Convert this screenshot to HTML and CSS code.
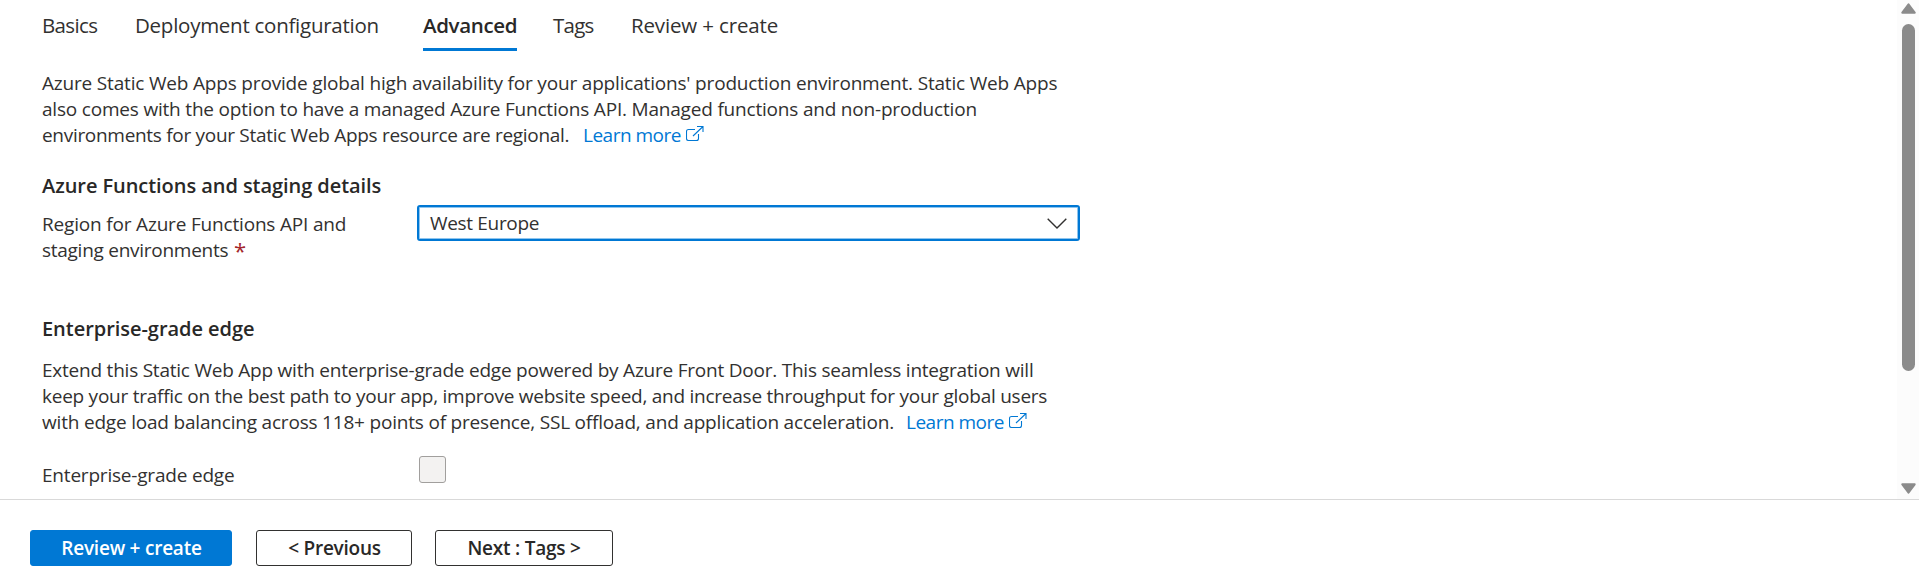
FILE: index.html
```html
<!DOCTYPE html>
<html lang="en">
<head>
<meta charset="utf-8">
<title>Create Static Web App</title>
<link rel="stylesheet" href="styles.css">
</head>
<body>
<div class="wizard">
  <div class="viewport">
    <main class="content">
      <nav class="tabs">
        <a class="tab tab-basics">Basics</a>
        <a class="tab tab-deploy">Deployment configuration</a>
        <a class="tab tab-advanced active">Advanced</a>
        <a class="tab tab-tags">Tags</a>
        <a class="tab tab-review">Review + create</a>
      </nav>

      <p class="copy intro">
        <span class="line l1">Azure Static Web Apps provide global high availability for your applications' production environment. Static Web Apps</span>
        <span class="line"><span class="l2">also comes with the option to have a managed Azure Functions API. Managed functions and non-production</span></span>
        <span class="line"><span class="l3">environments for your Static Web Apps resource are regional.</span><a class="link"><span>Learn more</span><svg class="ext" viewBox="0 0 18 17"><path d="M9 4.5H2.5a2 2 0 0 0-2 2V13.500a2 2 0 0 0 2 2h8a2 2 0 0 0 2-2V9M11 1.500h6v5.500M17 1.500 7 11"/></svg></a></span>
      </p>

      <h2 class="heading staging">Azure Functions and staging details</h2>
      <div class="field region-field">
        <label class="label"><span class="line region1">Region for Azure Functions API and</span><span class="line"><span class="region2">staging environments</span><span class="required">*</span></span></label>
        <div class="select">
          <span class="value">West Europe</span>
          <svg class="chevron" viewBox="0 0 20 11"><path d="M.7.7 10 10 19.3.7"/></svg>
        </div>
      </div>

      <h2 class="heading edge">Enterprise-grade edge</h2>
      <p class="copy edge-copy">
        <span class="line e1">Extend this Static Web App with enterprise-grade edge powered by Azure Front Door. This seamless integration will</span>
        <span class="line e2">keep your traffic on the best path to your app, improve website speed, and increase throughput for your global users</span>
        <span class="line"><span class="e3">with edge load balancing across 118+ points of presence, SSL offload, and application acceleration.</span><a class="link"><span>Learn more</span><svg class="ext" viewBox="0 0 18 17"><path d="M9 4.5H2.5a2 2 0 0 0-2 2V13.500a2 2 0 0 0 2 2h8a2 2 0 0 0 2-2V9M11 1.500h6v5.500M17 1.500 7 11"/></svg></a></span>
      </p>
      <div class="field check-field">
        <label class="label check-label">Enterprise-grade edge</label>
        <span class="checkbox"></span>
      </div>
    </main>
    <div class="scrollbar">
      <svg class="arrow" viewBox="0 0 15 11"><path d="M7.5 1.3 13.7 9.7H1.3z"/></svg>
      <div class="thumb"></div>
      <svg class="arrow down" viewBox="0 0 15 11"><path d="M7.5 9.7 1.3 1.3h12.4z"/></svg>
    </div>
  </div>
  <footer class="footer">
    <button class="btn primary">Review + create</button>
    <button class="btn previous">&lt; Previous</button>
    <button class="btn next">Next : Tags &gt;</button>
  </footer>
</div>
</body>
</html>
```

FILE: styles.css
```css
* { box-sizing: border-box; }

body {
  margin: 0;
  background: #fff;
  color: #323130;
  font: 19px/26px "Open Sans", "Noto Sans", sans-serif;
  overflow: hidden;
}

.wizard { display: flex; flex-direction: column; height: 587px; }
.viewport { display: flex; height: 499px; }
.content { flex: 1; padding-left: 42px; overflow: hidden; }

/* Tabs */
.tabs { display: flex; height: 51px; padding-top: 12px; font-size: 20.5px; }
.tab { white-space: nowrap; height: 39px; }
.tab-basics { width: 93px; letter-spacing: -0.65px; }
.tab-deploy { width: 288px; letter-spacing: -0.26px; }
.tab-advanced { width: 94px; margin-right: 36px; letter-spacing: -0.36px; }
.tab-tags { width: 78px; letter-spacing: -0.75px; }
.tab-review { letter-spacing: -0.15px; }
.active { font-weight: 600; color: #292827; border-bottom: 3px solid #0078d4; }

/* Text */
.copy { margin: 0; }
.line { display: flex; white-space: nowrap; height: 26px; }
.intro { margin-top: 19px; }
.l1 { letter-spacing: -0.18px; }
.l2 { letter-spacing: -0.195px; }
.l3 { width: 541px; letter-spacing: -0.3px; }
.e1 { letter-spacing: -0.225px; }
.e2 { letter-spacing: -0.252px; }
.e3 { width: 864px; letter-spacing: -0.195px; }

.link { display: flex; color: #0078d4; letter-spacing: -0.5px; }
.link span { width: 103px; }
.ext { width: 18px; height: 17px; margin-top: 3px; fill: none; stroke: #0078d4; stroke-width: 1.1; }

.heading { margin: 0; font-size: 20px; font-weight: 600; line-height: 26px; color: #292827; }
.staging { margin-top: 25px; letter-spacing: -0.06px; }
.edge { margin-top: 47px; letter-spacing: -0.04px; }
.edge-copy { margin-top: 15px; }

/* Form fields */
.field { display: flex; }
.region-field { margin-top: 6px; height: 64px; }
.label { width: 375px; padding-top: 6px; }
.region1 { letter-spacing: -0.18px; }
.region2 { width: 192px; letter-spacing: -0.27px; }
.required { color: #a4262c; font-size: 22px; }
.select {
  display: flex;
  justify-content: space-between;
  width: 663px;
  height: 36px;
  padding: 3px 11px 0;
  border: 2px solid #0078d4;
  border-radius: 3px;
  box-shadow: inset 0 0 0 1px #8fc5ee;
}
.value { letter-spacing: -0.33px; }
.chevron { width: 20px; height: 11px; margin-top: 8px; fill: none; stroke: #323130; stroke-width: 1.4; }

.check-field { margin-top: 21px; }
.check-label { width: 377px; padding-top: 6px; letter-spacing: -0.2px; }
.checkbox { width: 27px; height: 27px; background: #f3f2f1; border: 1px solid #a19f9d; border-radius: 3px; }

/* Scrollbar */
.scrollbar { display: flex; flex-direction: column; align-items: center; width: 22px; padding: 3px 0 5px; background: #fcfcfc; }
.arrow { width: 15px; height: 11px; fill: #8b8b8b; stroke: #8b8b8b; stroke-width: 2; stroke-linejoin: round; }
.thumb { width: 13px; height: 347px; margin-top: 10px; background: #8b8b8b; border-radius: 7px; }
.down { margin-top: auto; }

/* Footer */
.footer { display: flex; flex: 1; align-items: flex-start; padding: 30px 0 0 30px; border-top: 1px solid #d9d9d9; }
.btn {
  height: 36px;
  padding: 0 0 1px 1px;
  border: 1px solid #323130;
  border-radius: 3px;
  background: #fff;
  color: #292827;
  font: 600 19px/26px "Open Sans", "Noto Sans", sans-serif;
  letter-spacing: -0.23px;
}
.primary { width: 202px; border-color: #0078d4; background: #0078d4; color: #fff; }
.previous { width: 156px; margin-left: 24px; }
.next { width: 178px; margin-left: 23px; padding-left: 0; }
```
